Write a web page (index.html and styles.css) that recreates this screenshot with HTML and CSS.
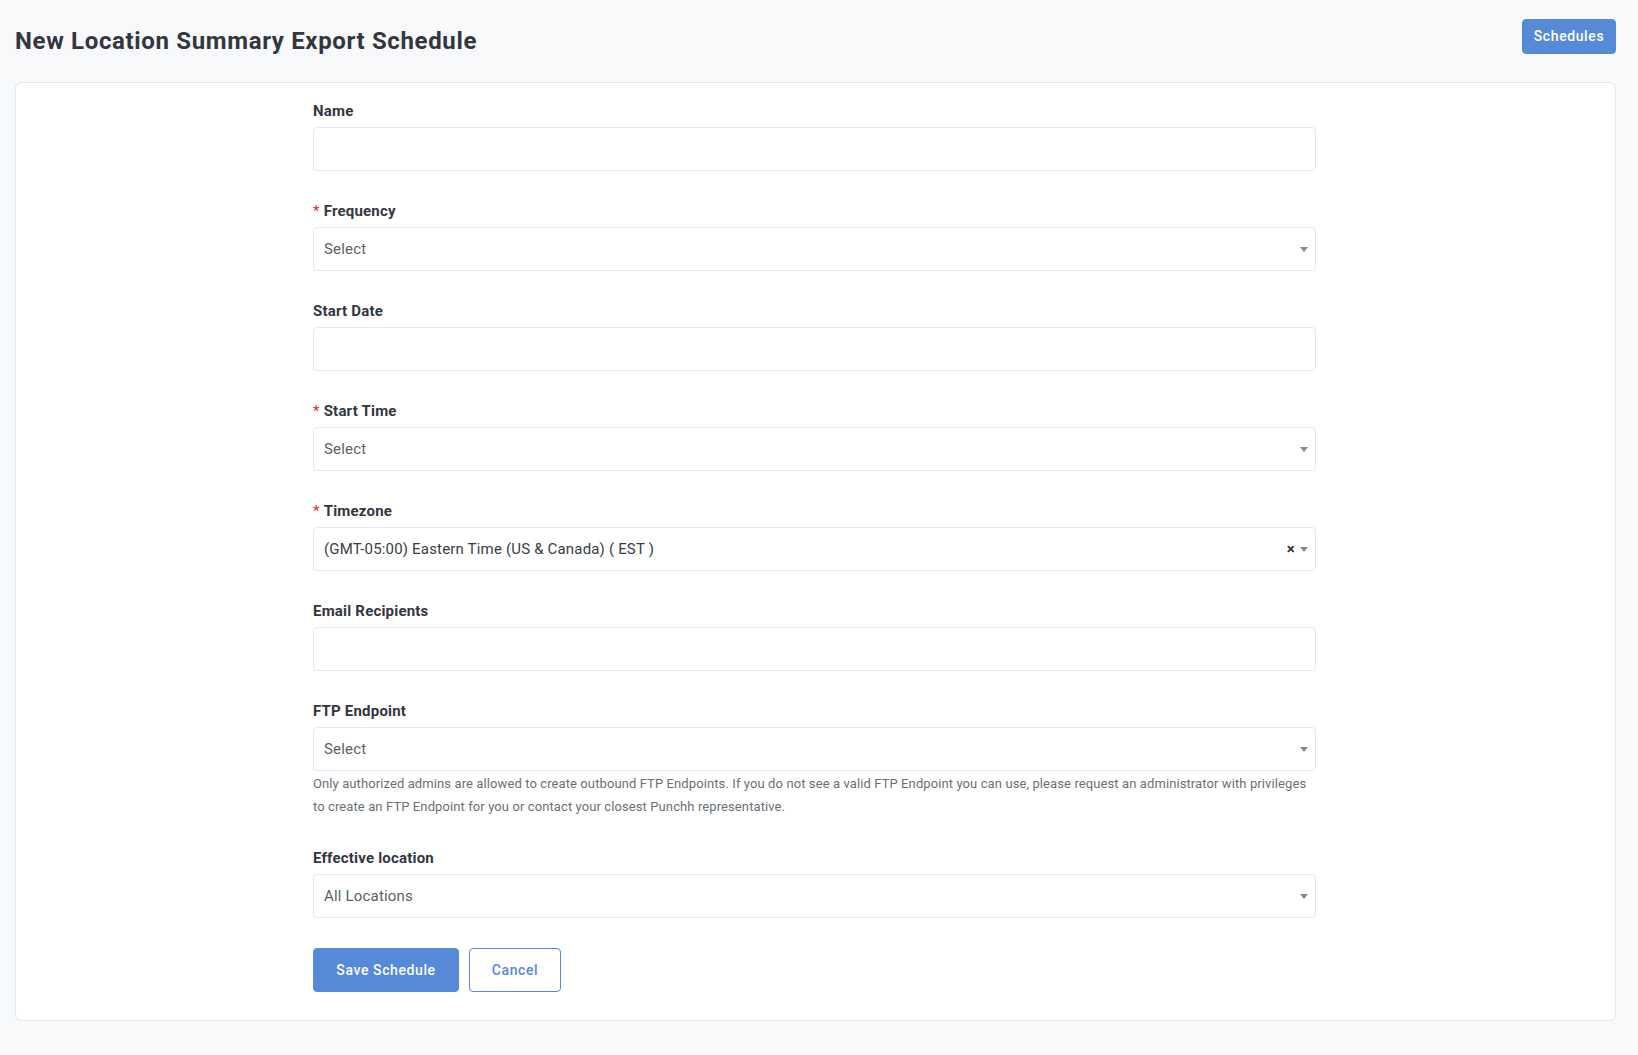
FILE: index.html
```html
<!DOCTYPE html>
<html lang="en">
<head>
<meta charset="utf-8">
<title>New Location Summary Export Schedule</title>
<link rel="stylesheet" href="styles.css">
</head>
<body>
<div class="page">
  <header class="page-header">
    <h1 class="page-title">New Location Summary Export Schedule</h1>
    <a class="btn btn-primary btn-sm" href="#">Schedules</a>
  </header>

  <section class="card">
    <form class="schedule-form">
      <div class="field">
        <label class="field-label">Name</label>
        <div class="input"></div>
      </div>

      <div class="field">
        <label class="field-label"><span class="req">*</span>Frequency</label>
        <div class="input select"><span class="placeholder">Select</span><span class="caret"></span></div>
      </div>

      <div class="field">
        <label class="field-label">Start Date</label>
        <div class="input"></div>
      </div>

      <div class="field">
        <label class="field-label"><span class="req">*</span>Start Time</label>
        <div class="input select"><span class="placeholder">Select</span><span class="caret"></span></div>
      </div>

      <div class="field">
        <label class="field-label"><span class="req">*</span>Timezone</label>
        <div class="input select"><span class="value">(GMT-05:00) Eastern Time (US &amp; Canada) ( EST )</span><span class="clear">×</span><span class="caret"></span></div>
      </div>

      <div class="field">
        <label class="field-label">Email Recipients</label>
        <div class="input"></div>
      </div>

      <div class="field field-help">
        <label class="field-label">FTP Endpoint</label>
        <div class="input select"><span class="placeholder">Select</span><span class="caret"></span></div>
        <p class="help">Only authorized admins are allowed to create outbound FTP Endpoints. If you do not see a valid FTP Endpoint you can use, please request an administrator with privileges to create an FTP Endpoint for you or contact your closest Punchh representative.</p>
      </div>

      <div class="field">
        <label class="field-label">Effective location</label>
        <div class="input select"><span class="placeholder">All Locations</span><span class="caret"></span></div>
      </div>

      <div class="actions">
        <button type="button" class="btn btn-primary btn-lg">Save Schedule</button>
        <button type="button" class="btn btn-outline btn-lg">Cancel</button>
      </div>
    </form>
  </section>
</div>
</body>
</html>
```

FILE: styles.css
```css
* {
  box-sizing: border-box;
}

html, body {
  margin: 0;
  padding: 0;
  background: #f8f9fb;
}

body {
  font-family: Roboto, "Liberation Sans", Arial, sans-serif;
  color: #343a45;
}

.page {
  padding: 19px 22px 35px 15px;
}

.page-header {
  display: flex;
  justify-content: space-between;
  align-items: flex-start;
  height: 63px;
}

.page-title {
  margin: 7px 0 0 0;
  font-size: 24px;
  line-height: 30px;
  font-weight: 700;
  color: #33363f;
  letter-spacing: 0.65px;
}

.btn {
  display: inline-flex;
  align-items: center;
  justify-content: center;
  font-family: Roboto, "Liberation Sans", Arial, sans-serif;
  font-weight: 500;
  border-radius: 4px;
  text-decoration: none;
  cursor: pointer;
  letter-spacing: 0.6px;
}

.btn-primary {
  background: #5689d6;
  color: #ffffff;
  border: 1px solid #5689d6;
}

.btn-outline {
  background: #ffffff;
  color: #5689d6;
  border: 1px solid #5689d6;
}

.btn-sm {
  width: 94px;
  height: 35px;
  padding-bottom: 2px;
  font-size: 14px;
}

.btn-lg {
  height: 44px;
  font-size: 14px;
  padding: 0;
}

.actions .btn-primary {
  width: 146px;
}

.actions .btn-outline {
  width: 92px;
}

.card {
  background: #ffffff;
  border: 1px solid #e3e8f1;
  border-radius: 6px;
  padding: 18px 0 28px;
}

.schedule-form {
  width: 1003px;
  margin: 0 auto 0 297px;
}

.field {
  margin-bottom: 30px;
}

.field-label {
  display: block;
  font-size: 15px;
  line-height: 20px;
  font-weight: 700;
  color: #33363f;
  letter-spacing: 0.2px;
  margin-bottom: 6px;
}

.req {
  color: #f5222d;
  font-weight: 400;
  margin-right: 4px;
}

.input {
  position: relative;
  height: 44px;
  border: 1px solid #e2e7f0;
  border-radius: 4px;
  background: #ffffff;
  display: flex;
  align-items: center;
  padding: 0 10px;
  font-size: 15px;
  letter-spacing: 0.18px;
}

.placeholder {
  color: #5c5f66;
}

.value {
  color: #3a3d44;
}

.caret {
  position: absolute;
  right: 7px;
  top: 50%;
  margin-top: -2px;
  width: 0;
  height: 0;
  border-left: 4px solid transparent;
  border-right: 4px solid transparent;
  border-top: 5px solid #888888;
}

.clear {
  position: absolute;
  right: 20px;
  top: 50%;
  transform: translateY(-50%);
  font-size: 15px;
  font-weight: 700;
  color: #333333;
  line-height: 1;
}

.field-help {
  margin-bottom: 30px;
}

.help {
  max-width: 996px;
  margin: 1px 0 0 0;
  font-size: 13px;
  line-height: 23px;
  letter-spacing: 0.1px;
  color: #6b6f76;
}

.actions {
  display: flex;
  gap: 10px;
  margin-top: 30px;
}
```
